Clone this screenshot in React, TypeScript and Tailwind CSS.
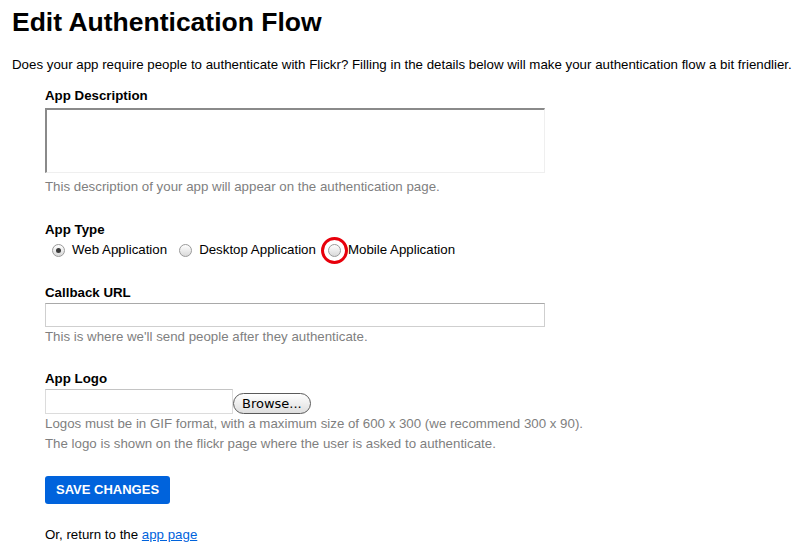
import React from "react";

const Radio = ({ checked, label, ring }: { checked?: boolean; label: string; ring?: boolean }) => (
  <label className="flex items-center">
    <span className="relative mr-[7px] flex h-[13px] w-[13px] items-center justify-center">
      <span className="flex h-[13px] w-[13px] items-center justify-center rounded-full border border-[#9a9a9a] bg-gradient-to-b from-white to-[#d9d9d9]">
        {checked && <span className="h-[5px] w-[5px] rounded-full bg-[#3a3a3a]" />}
      </span>
      {ring && (
        <span className="absolute left-[-7px] top-[-7px] h-[27px] w-[27px] rounded-full border-[3px] border-[#e8000b]" />
      )}
    </span>
    <span>{label}</span>
  </label>
);

export default function App() {
  return (
    <div className="min-h-[558px] bg-white px-[12px] text-[13.3px] text-black" style={{ fontFamily: '"Liberation Sans", Arial, sans-serif' }}>
      <h1 className="pt-[6px] text-[26.5px] font-bold leading-[32px]">Edit Authentication Flow</h1>
      <p className="mt-[19px] leading-[16px]">
        Does your app require people to authenticate with Flickr? Filling in the details below will make your authentication flow a bit friendlier.
      </p>

      <form className="pl-[33px]" onSubmit={(e) => e.preventDefault()}>
        <div className="mt-[15px] font-bold leading-[16px]">App Description</div>
        <textarea className="mt-[4px] block h-[65px] w-[500px] resize-none border-b border-l-2 border-r border-t-2 border-b-[#efefef] border-l-[#8a8a8a] border-r-[#efefef] border-t-[#8a8a8a] outline-none" />
        <div className="mt-[6px] leading-[16px] text-[#7f7f7f]">This description of your app will appear on the authentication page.</div>

        <div className="mt-[27px] font-bold leading-[16px]">App Type</div>
        <div className="mt-[4px] flex h-[16px] items-center gap-[12px] pl-[7px]">
          <Radio checked label="Web Application" />
          <Radio label="Desktop Application" />
          <Radio ring label="Mobile Application" />
        </div>

        <div className="mt-[27px] font-bold leading-[16px]">Callback URL</div>
        <input className="mt-[2px] block h-[24px] w-[500px] border border-[#cfcfcf] border-t-[#a9a9a9] outline-none" />
        <div className="mt-[2px] leading-[16px] text-[#7f7f7f]">This is where we'll send people after they authenticate.</div>

        <div className="mt-[26px] font-bold leading-[16px]">App Logo</div>
        <div className="mt-[2px] flex items-center">
          <div className="h-[25px] w-[188px] border border-[#dcdcdc] border-t-[#c4c4c4]" />
          <button
            type="button"
            className="ml-[0px] mt-[3px] h-[21px] rounded-full border border-[#5a5a5a] bg-gradient-to-b from-white to-[#dedede] px-[8px] text-[13px] leading-[19px] text-black"
            style={{ fontFamily: '"DejaVu Sans", sans-serif' }}
          >
            Browse...
          </button>
        </div>
        <div className="leading-[20px] text-[#7f7f7f]">
          <div>Logos must be in GIF format, with a maximum size of 600 x 300 (we recommend 300 x 90).</div>
          <div>The logo is shown on the flickr page where the user is asked to authenticate.</div>
        </div>

        <button type="submit" className="mt-[22px] block h-[28px] rounded-[3px] bg-[#0063dc] px-[11px] text-[13px] font-bold leading-[28px] text-white">
          SAVE CHANGES
        </button>

        <div className="mt-[23px] leading-[16px]">
          Or, return to the <a href="#" className="text-[#0063dc] underline">app page</a>
        </div>
      </form>
    </div>
  );
}
